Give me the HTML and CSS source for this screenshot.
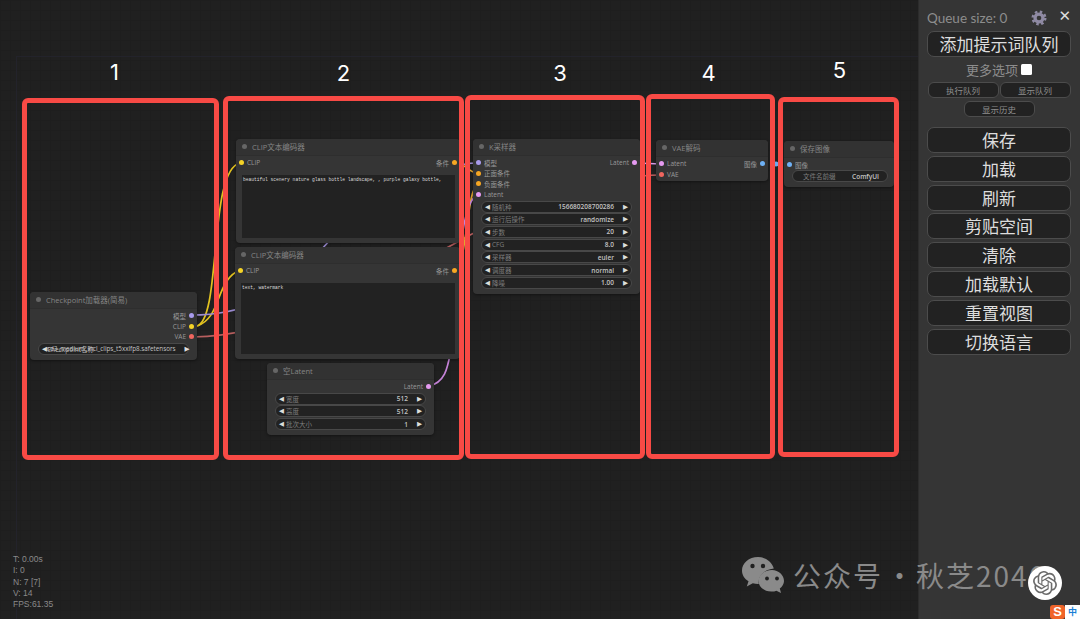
FILE: index.html
```html
<!DOCTYPE html>
<html lang="zh">
<head>
  <meta charset="UTF-8" />
  <title>ComfyUI</title>
  <link rel="stylesheet" href="styles.css">
</head>
<body>
  <main class="canvas">
    <div class="group-edge"></div>

    <!-- Links between the nodes -->
    <svg class="links" width="919" height="619" fill="none" stroke-width="1.7">
      <path stroke="#e2c21f" d="M197 326C222 318 208 170 240 163"/>
      <path stroke="#e2c21f" d="M197 326C222 318 215 280 240 270"/>
      <path stroke="#9a8ad0" d="M192 315C260 315 290 285 330 240C370 200 440 163 478 163"/>
      <path stroke="#b85f5f" d="M192 337C300 335 420 262 470 235C530 205 600 175 661 175"/>
      <path stroke="#e3a52e" d="M455 163C466 163 468 173 478 173"/>
      <path stroke="#e3a52e" d="M455 270C468 262 466 190 478 184"/>
      <path stroke="#c583d8" d="M429 386C448 382 448 362 452 345C458 280 460 200 478 195"/>
      <path stroke="#d79be8" d="M636 163L661 164"/>
      <path stroke="#6fa8ee" stroke-dasharray="2 5" d="M763 164L789 164"/>
      <circle cx="776" cy="164" r="2.5" fill="#6fa8ee" stroke="none"/>
    </svg>

    <!-- Checkpoint -->
    <section class="node node-ckpt">
      <h3 class="node-title"><i></i>Checkpoint加载器(简易)</h3>
      <div class="slot out"><span>模型</span><b class="port purple"></b></div>
      <div class="slot out"><span>CLIP</span><b class="port yellow"></b></div>
      <div class="slot out"><span>VAE</span><b class="port red"></b></div>
      <div class="widget overlap">
        <em>◀</em><span class="ghost">Checkpoint名称</span><strong>sd3_medium_incl_clips_t5xxlfp8.safetensors</strong><em>▶</em>
      </div>
    </section>

    <!-- Prompt nodes -->
    <section class="node node-clip-a">
      <h3 class="node-title"><i></i>CLIP文本编码器</h3>
      <div class="slot both"><b class="port yellow"></b><span>CLIP</span><span class="push">条件</span><b class="port orange"></b></div>
      <div class="prompt prompt-a">beautiful scenery nature glass bottle landscape, , purple galaxy bottle,</div>
    </section>

    <section class="node node-clip-b">
      <h3 class="node-title"><i></i>CLIP文本编码器</h3>
      <div class="slot both"><b class="port yellow"></b><span>CLIP</span><span class="push">条件</span><b class="port orange"></b></div>
      <div class="prompt prompt-b">text, watermark</div>
    </section>

    <section class="node node-latent">
      <h3 class="node-title"><i></i>空Latent</h3>
      <div class="slot out"><span>Latent</span><b class="port pink"></b></div>
      <div class="widget"><em>◀</em><span>宽度</span><strong>512</strong><em>▶</em></div>
      <div class="widget"><em>◀</em><span>高度</span><strong>512</strong><em>▶</em></div>
      <div class="widget"><em>◀</em><span>批次大小</span><strong>1</strong><em>▶</em></div>
    </section>

    <!-- Sampler -->
    <section class="node node-sampler">
      <h3 class="node-title"><i></i>K采样器</h3>
      <div class="slot both"><b class="port purple"></b><span>模型</span><span class="push">Latent</span><b class="port pink"></b></div>
      <div class="slot"><b class="port orange"></b><span>正面条件</span></div>
      <div class="slot"><b class="port orange"></b><span>负面条件</span></div>
      <div class="slot"><b class="port pink"></b><span>Latent</span></div>
      <div class="widget"><em>◀</em><span>随机种</span><strong>156680208700286</strong><em>▶</em></div>
      <div class="widget"><em>◀</em><span>运行后操作</span><strong>randomize</strong><em>▶</em></div>
      <div class="widget"><em>◀</em><span>步数</span><strong>20</strong><em>▶</em></div>
      <div class="widget"><em>◀</em><span>CFG</span><strong>8.0</strong><em>▶</em></div>
      <div class="widget"><em>◀</em><span>采样器</span><strong>euler</strong><em>▶</em></div>
      <div class="widget"><em>◀</em><span>调度器</span><strong>normal</strong><em>▶</em></div>
      <div class="widget"><em>◀</em><span>降噪</span><strong>1.00</strong><em>▶</em></div>
    </section>

    <section class="node node-vae">
      <h3 class="node-title"><i></i>VAE解码</h3>
      <div class="slot both"><b class="port pink"></b><span>Latent</span><span class="push">图像</span><b class="port blue"></b></div>
      <div class="slot"><b class="port red"></b><span>VAE</span></div>
    </section>

    <section class="node node-save">
      <h3 class="node-title"><i></i>保存图像</h3>
      <div class="slot"><b class="port blue"></b><span>图像</span></div>
      <div class="widget plain"><span>文件名前缀</span><strong>ComfyUI</strong></div>
    </section>

    <!-- Hand drawn annotation boxes -->
    <div class="mark mark-1"><span>1</span></div>
    <div class="mark mark-2"><span>2</span></div>
    <div class="mark mark-3"><span>3</span></div>
    <div class="mark mark-4"><span>4</span></div>
    <div class="mark mark-5"><span>5</span></div>

    <div class="stats">
      <p>T: 0.00s</p>
      <p>I: 0</p>
      <p>N: 7 [7]</p>
      <p>V: 14</p>
      <p>FPS:61.35</p>
    </div>
  </main>

  <aside class="menu">
    <div class="queue-row">
      <span class="queue-label">Queue size: 0</span>
      <svg class="gear" width="16" height="16" viewBox="0 0 16 16">
        <circle cx="8" cy="8" r="5.6" fill="#8f8aa3"/>
        <circle cx="8" cy="8" r="6.3" fill="none" stroke="#8f8aa3" stroke-width="2.4" stroke-dasharray="2.5 2.45"/>
        <circle cx="8" cy="8" r="2.3" fill="#353535"/>
      </svg>
      <span class="close">✕</span>
    </div>
    <button class="btn">添加提示词队列</button>
    <label class="options">更多选项<i class="check"></i></label>
    <div class="small-row">
      <button class="btn-small">执行队列</button>
      <button class="btn-small">显示队列</button>
      <button class="btn-small">显示历史</button>
    </div>
    <div class="btn-list">
      <button class="btn">保存</button>
      <button class="btn">加载</button>
      <button class="btn">刷新</button>
      <button class="btn">剪贴空间</button>
      <button class="btn">清除</button>
      <button class="btn">加载默认</button>
      <button class="btn">重置视图</button>
      <button class="btn">切换语言</button>
    </div>
  </aside>

  <!-- Watermark and overlays from the screen capture -->
  <div class="watermark">
    <svg width="42" height="36" viewBox="0 0 42 36">
      <path fill="#8a8a8a" d="M16 0C7 0 0 6 0 13.500C0 18 2.500 21.800 6.500 24.300L4.800 29.500L10.800 26.300C12.800 26.900 14.800 27.200 16.800 27.100C15.500 20 21.500 12.500 31.800 11.500C30 5 23.600 0 16 0Z"/>
      <path fill="#8a8a8a" d="M30 13C22.500 13 16.500 18 16.500 24C16.500 30 22.500 35 30 34.600C31.500 34.600 33 34.400 34.400 33.800L39 36L37.800 31.500C40.400 29.500 42 26.900 42 24C42 18 36.500 13 30 13Z"/>
      <circle cx="10.500" cy="9" r="2.200" fill="#202020"/>
      <circle cx="21" cy="9" r="2.200" fill="#202020"/>
      <circle cx="25" cy="21.500" r="1.900" fill="#202020"/>
      <circle cx="35" cy="21.500" r="1.900" fill="#202020"/>
    </svg>
    <span class="wm-text">公众号<span class="wm-dot">·</span>秋芝2046</span>
  </div>

  <div class="gpt-badge">
    <svg width="24" height="24" viewBox="0 0 24 24">
      <path fill="#6b6b6b" d="M22.2819 9.8211a5.9847 5.9847 0 0 0-.5157-4.9108 6.0462 6.0462 0 0 0-6.5098-2.9A6.0651 6.0651 0 0 0 4.9807 4.1818a5.9847 5.9847 0 0 0-3.9977 2.9 6.0462 6.0462 0 0 0 .7427 7.0966 5.98 5.98 0 0 0 .511 4.9107 6.051 6.051 0 0 0 6.5146 2.9001A5.9847 5.9847 0 0 0 13.2599 24a6.0557 6.0557 0 0 0 5.7718-4.2058 5.9894 5.9894 0 0 0 3.9977-2.9001 6.0557 6.0557 0 0 0-.7475-7.0729zm-9.022 12.6081a4.4755 4.4755 0 0 1-2.8764-1.0408l.1419-.0804 4.7783-2.7582a.7948.7948 0 0 0 .3927-.6813v-6.7369l2.02 1.1686a.071.071 0 0 1 .038.052v5.5826a4.504 4.504 0 0 1-4.4945 4.4944zm-9.6607-4.1254a4.4708 4.4708 0 0 1-.5346-3.0137l.142.0852 4.783 2.7582a.7712.7712 0 0 0 .7806 0l5.8428-3.3685v2.3324a.0804.0804 0 0 1-.0332.0615L9.74 19.9502a4.4992 4.4992 0 0 1-6.1408-1.6464zM2.3408 7.8956a4.485 4.485 0 0 1 2.3655-1.9728V11.6a.7664.7664 0 0 0 .3879.6765l5.8144 3.3543-2.0201 1.1685a.0757.0757 0 0 1-.071 0l-4.8303-2.7865A4.504 4.504 0 0 1 2.3408 7.872zm16.5963 3.8558L13.1038 8.364 15.1192 7.2a.0757.0757 0 0 1 .071 0l4.8303 2.7913a4.4944 4.4944 0 0 1-.6765 8.1042v-5.6772a.79.79 0 0 0-.407-.667zm2.0107-3.0231l-.142-.0852-4.7735-2.7818a.7759.7759 0 0 0-.7854 0L9.409 9.2297V6.8974a.0662.0662 0 0 1 .0284-.0615l4.8303-2.7866a4.4992 4.4992 0 0 1 6.6802 4.66zM8.3065 12.863l-2.02-1.1638a.0804.0804 0 0 1-.038-.0567V6.0742a4.4992 4.4992 0 0 1 7.3757-3.4537l-.142.0805L8.704 5.459a.7948.7948 0 0 0-.3927.6813zm1.0976-2.3654l2.602-1.4998 2.6069 1.4998v2.9994l-2.5974 1.4997-2.6067-1.4997Z"/>
    </svg>
  </div>

  <div class="ime">
    <span class="ime-logo">S</span>
    <span class="ime-lang">中</span>
  </div>
</body>
</html>
```

FILE: styles.css
```css
* {
  margin: 0;
  padding: 0;
  box-sizing: border-box;
}

body {
  width: 1080px;
  height: 619px;
  overflow: hidden;
  display: flex;
  position: relative;
  font-family: 'Open Sans', 'Noto Sans CJK SC', sans-serif;
  background: #202020;
}

/* Canvas */
.canvas {
  position: relative;
  width: 918px;
  height: 619px;
  overflow: hidden;
  background-color: #202020;
  background-image:
    linear-gradient(to right, #1e1e1e 1px, transparent 1px),
    linear-gradient(to bottom, #1e1e1e 1px, transparent 1px);
  background-size: 10px 10px;
}

.group-edge {
  position: absolute;
  left: 16px;
  top: 56px;
  right: 0;
  bottom: 0;
  border-left: 1px solid #23232b;
  border-top: 1px solid #23232b;
}

.links {
  position: absolute;
  left: 0;
  top: 0;
}

/* Nodes */
.node {
  position: absolute;
  background: #353535;
  border-radius: 4px;
  box-shadow: 0 1px 3px rgba(0,0,0,0.4);
  overflow: hidden;
  font-size: 6.5px;
  color: #999;
}

.node-ckpt { left: 30px; top: 292px; width: 167px; height: 68px; }
.node-clip-a { left: 236px; top: 139px; width: 224px; height: 104px; }
.node-clip-b { left: 235px; top: 247px; width: 225px; height: 112px; }
.node-latent { left: 267px; top: 363px; width: 167px; height: 72px; }
.node-sampler { left: 473px; top: 139px; width: 167px; height: 155px; }
.node-vae { left: 656px; top: 140px; width: 112px; height: 41px; }
.node-save { left: 784px; top: 141px; width: 110px; height: 46px; }

.node-ckpt, .node-latent, .node-sampler, .node-vae, .node-save {
  overflow: visible;
}

.node-title {
  display: flex;
  align-items: center;
  gap: 5px;
  height: 17px;
  padding-left: 5px;
  padding-bottom: 1px;
  background: #323232;
  border-bottom: 1px solid #2e2e2e;
  border-radius: 4px 4px 0 0;
  font-size: 7.5px;
  font-weight: 400;
  color: #858585;
}

.node-title i {
  width: 5px;
  height: 5px;
  margin-left: 1px;
  border-radius: 50%;
  background: #666;
}

.slot {
  display: flex;
  align-items: center;
  gap: 3px;
  height: 10.6px;
  padding: 0 3px;
  white-space: nowrap;
}

.node > .node-title + .slot {
  margin-top: 1.5px;
}

.slot.out {
  justify-content: flex-end;
}

.slot .push {
  margin-left: auto;
}

.port {
  width: 5px;
  height: 5px;
  border-radius: 50%;
  flex: none;
}

.port.purple { background: #a89bec; }
.port.yellow { background: #f5d327; }
.port.red { background: #f0665f; }
.port.orange { background: #f5a623; }
.port.pink { background: #e59af0; }
.port.blue { background: #6fb1f5; }

/* Widgets */
.widget {
  position: relative;
  display: flex;
  align-items: center;
  height: 12px;
  margin: 0.7px 8px 0;
  padding: 0 3px;
  background: #222;
  border: 1px solid #484848;
  border-radius: 6px;
  color: #7d7d7d;
  white-space: nowrap;
  font-size: 6.5px;
}

.widget span {
  margin-left: 2px;
}

.widget strong {
  margin-left: auto;
  margin-right: 9px;
  font-weight: 600;
  color: #c4c4c4;
}

.widget em {
  font-family: 'DejaVu Sans', sans-serif;
  font-style: normal;
  font-size: 6.5px;
  color: #ddd;
}

.widget.plain {
  margin: 0 6px 0 8px;
  padding: 0 8px;
}

.widget.plain strong {
  margin-right: 0;
}

.widget.overlap .ghost {
  position: absolute;
  left: 8px;
  margin-left: 0;
  color: #bbb;
}

.widget.overlap strong {
  font-weight: 400;
  font-size: 6.3px;
}

.prompt {
  margin: 6.5px 5px 0 6px;
  padding: 1px;
  background: #222;
  color: #ddd;
  font-family: 'Liberation Mono', monospace;
  font-size: 4.6px;
  line-height: 7px;
}

.prompt-a { height: 63px; }
.prompt-b { height: 71px; }

/* Annotation boxes */
.mark {
  position: absolute;
  border: 5px solid #f84a45;
  border-radius: 6px;
  display: flex;
  justify-content: center;
}

.mark span {
  position: absolute;
  color: #fff;
  font-family: Inter, sans-serif;
  font-size: 22px;
  line-height: 28px;
}

.mark-1 { left: 22px; top: 98px; width: 197px; height: 362px; }
.mark-2 { left: 223px; top: 96px; width: 241px; height: 364px; }
.mark-3 { left: 465px; top: 95px; width: 180px; height: 364px; }
.mark-4 { left: 646px; top: 94px; width: 129px; height: 365px; }
.mark-5 { left: 778px; top: 97px; width: 121px; height: 360px; }

.mark-1 span { top: -45px; margin-left: -12px; }
.mark-2 span { top: -42px; }
.mark-3 span { top: -41px; margin-left: 10px; }
.mark-4 span { top: -40px; margin-left: -4px; }
.mark-5 span { top: -46px; margin-left: 2px; }

.stats {
  position: absolute;
  left: 13px;
  top: 554px;
  font-family: 'Liberation Sans', sans-serif;
  font-size: 8.5px;
  line-height: 11.3px;
  color: #8a8a8a;
}

/* Side menu */
.menu {
  width: 162px;
  height: 619px;
  padding: 0 9px 0 8px;
  background: #353535;
  border-left: 1px solid #2c2c2c;
  display: flex;
  flex-direction: column;
  align-items: stretch;
  color: #999;
}

.queue-row {
  display: flex;
  align-items: center;
  height: 31px;
  padding-top: 4px;
}

.queue-label {
  font-family: Lato, sans-serif;
  font-size: 13.5px;
  color: #8d8d8d;
}

.gear {
  margin-left: auto;
}

.close {
  margin: -4px 0 0 11px;
  font-family: 'DejaVu Sans', sans-serif;
  font-size: 15px;
  font-weight: 700;
  color: #ddd;
}

.btn {
  height: 26px;
  background: #222;
  border: 1px solid #4c4c4c;
  border-radius: 7px;
  color: #ddd;
  font-family: 'Noto Sans CJK SC', sans-serif;
  font-size: 17px;
  line-height: 22px;
}

.options {
  display: flex;
  justify-content: center;
  align-items: center;
  gap: 3px;
  height: 25px;
  padding-bottom: 1px;
  font-family: 'Noto Sans CJK SC', sans-serif;
  font-size: 13px;
  color: #8d8d8d;
}

.check {
  width: 11px;
  height: 11px;
  background: #fff;
  border-radius: 1.5px;
}

.small-row {
  display: flex;
  flex-wrap: wrap;
  justify-content: center;
  gap: 3px 1px;
}

.btn-small {
  width: 71px;
  height: 16px;
  background: #222;
  border: 1px solid #4c4c4c;
  border-radius: 6px;
  color: #8f8f8f;
  font-family: 'Noto Sans CJK SC', sans-serif;
  font-size: 8.5px;
}

.btn-list {
  display: flex;
  flex-direction: column;
  gap: 2.8px;
  margin-top: 10px;
}

/* Capture overlays */
.watermark {
  position: absolute;
  left: 742px;
  top: 557px;
  display: flex;
  align-items: flex-start;
  gap: 9px;
  color: #8a8a8a;
  font-family: 'Noto Sans CJK SC', sans-serif;
  font-size: 28px;
  line-height: 36px;
  white-space: nowrap;
  pointer-events: none;
}

.wm-text {
  letter-spacing: 2px;
}

.wm-dot {
  display: inline-block;
  width: 33px;
  text-align: center;
  letter-spacing: 0;
}

.gpt-badge {
  position: absolute;
  left: 1028px;
  top: 566px;
  width: 34px;
  height: 34px;
  display: flex;
  align-items: center;
  justify-content: center;
  background: #fff;
  border-radius: 50%;
}

.ime {
  position: absolute;
  right: 0;
  bottom: 0;
  display: flex;
  align-items: stretch;
  height: 14px;
}

.ime-logo {
  width: 15px;
  background: #f0642a;
  border-radius: 3px;
  color: #fff;
  font-family: 'Liberation Sans', sans-serif;
  font-weight: 700;
  font-size: 13px;
  line-height: 14px;
  text-align: center;
}

.ime-lang {
  width: 15px;
  background: #fff;
  color: #1b7fd6;
  font-family: 'Noto Sans CJK SC', sans-serif;
  font-size: 9px;
  font-weight: 700;
  line-height: 14px;
  text-align: center;
}
```
